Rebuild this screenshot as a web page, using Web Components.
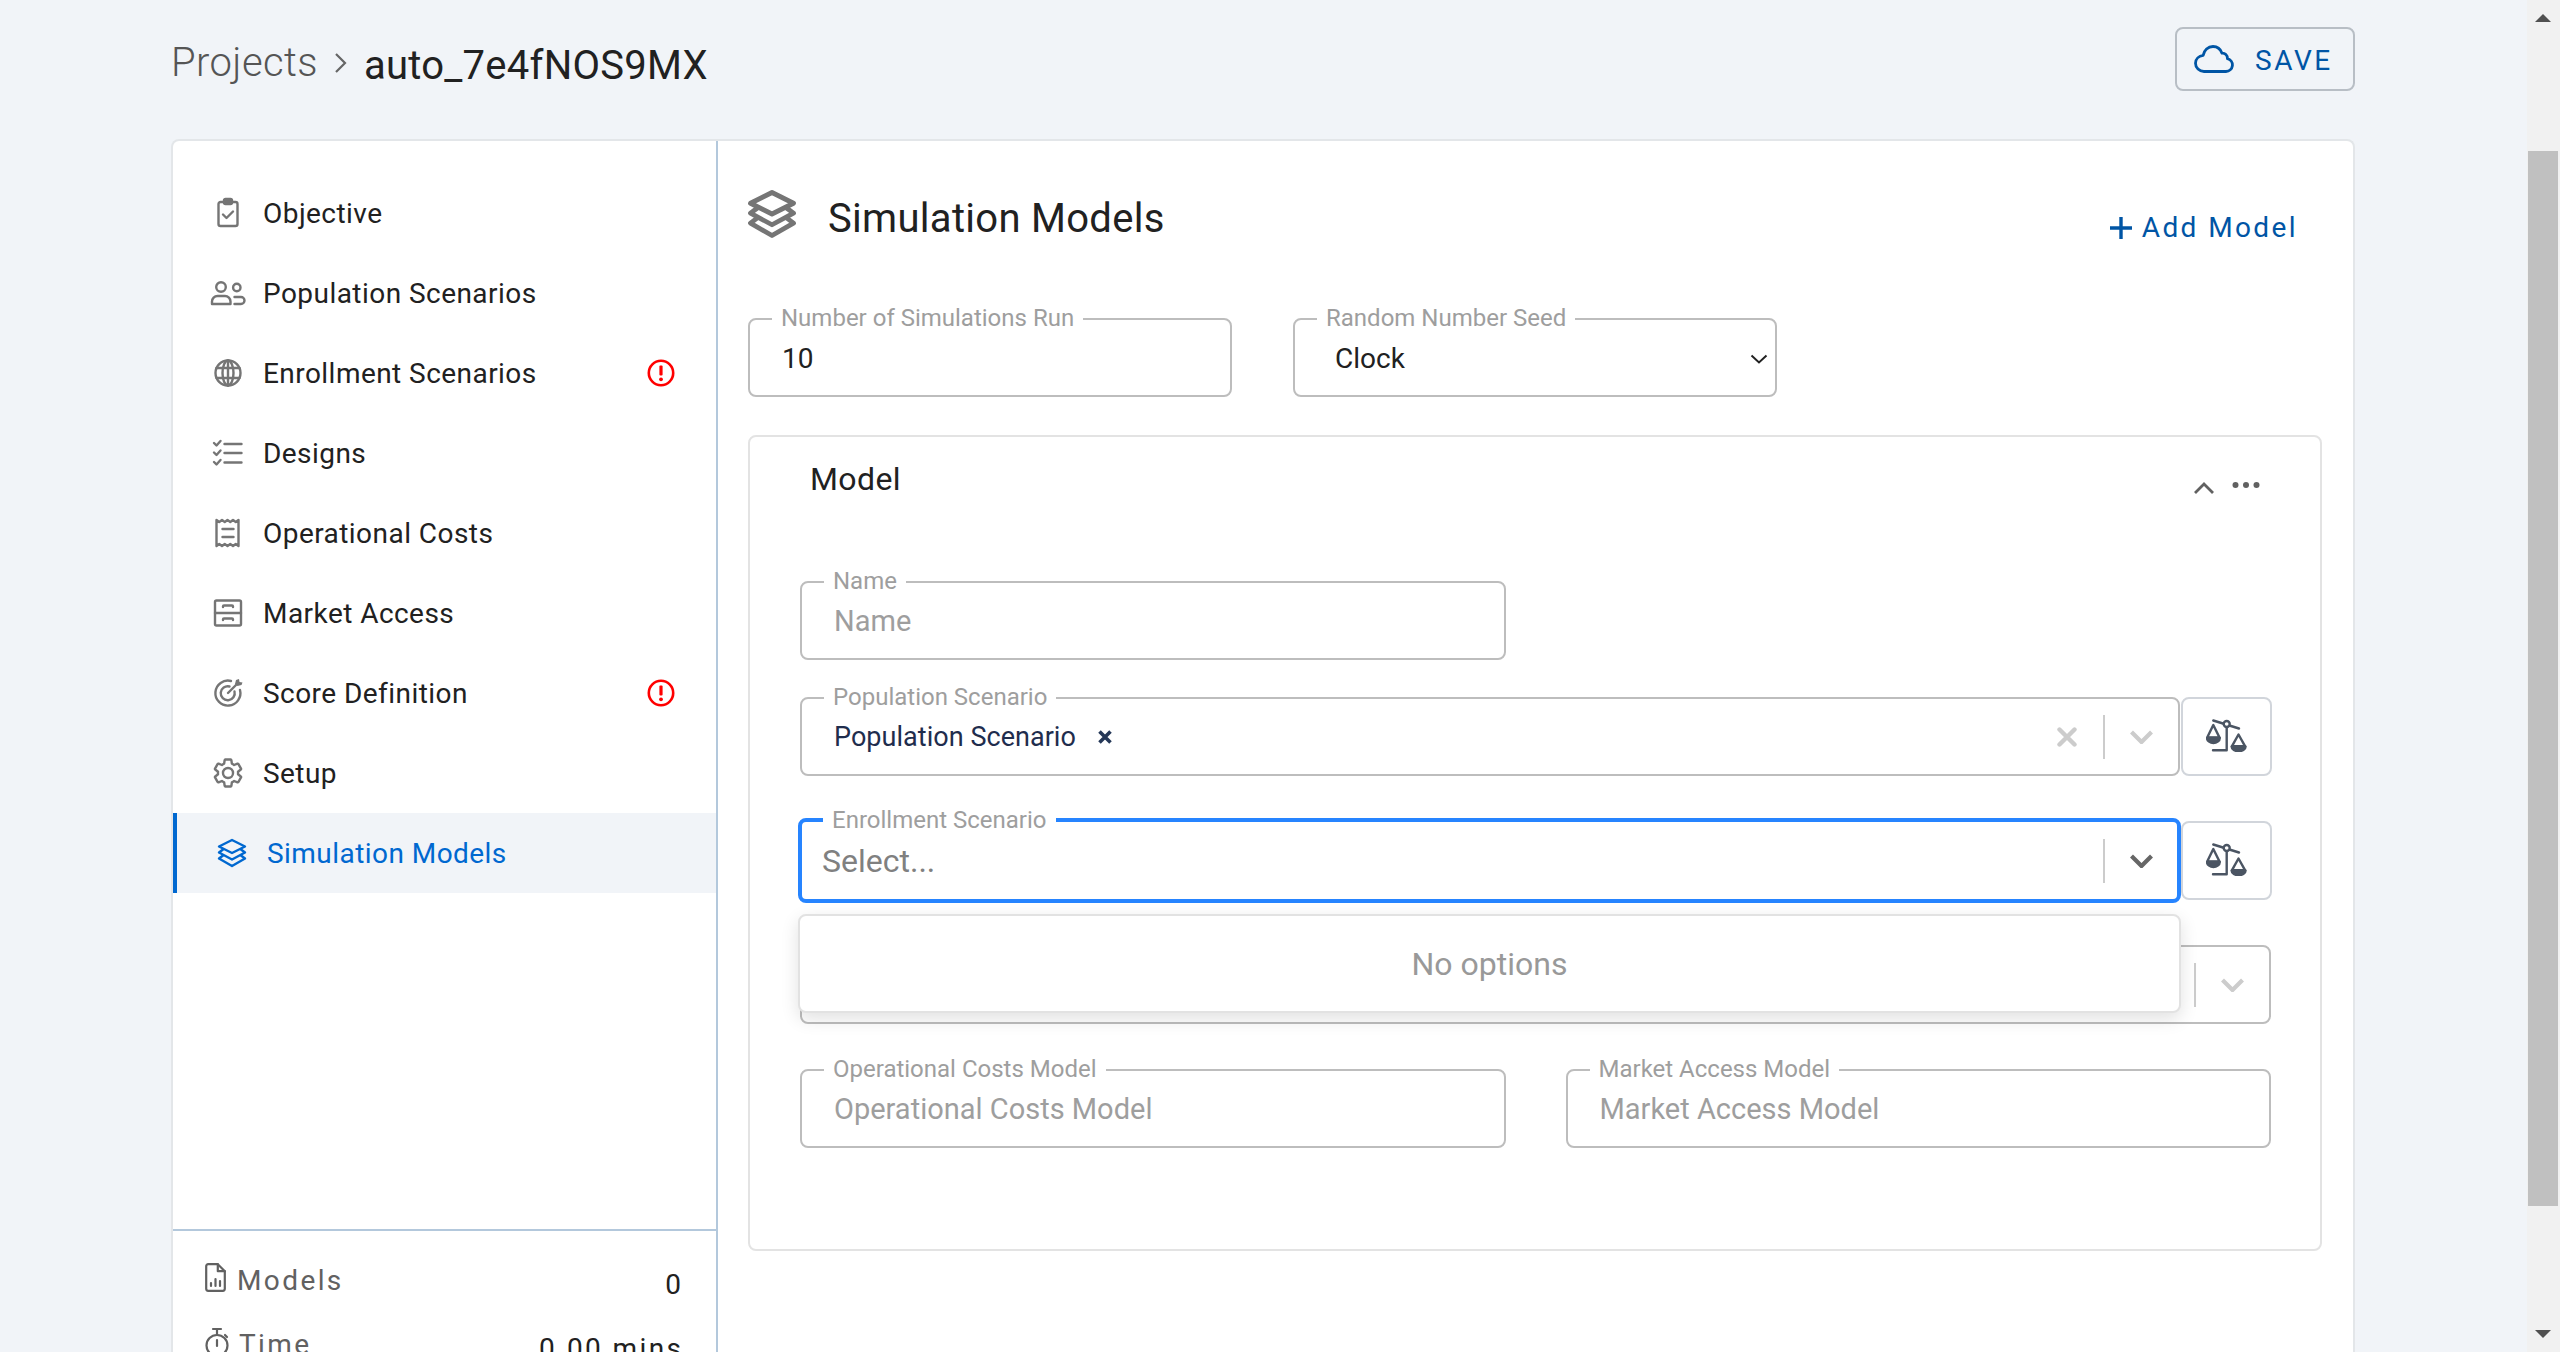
<!DOCTYPE html>
<html>
<head>
<meta charset="utf-8">
<style>
  html, body { margin: 0; height: 100%; overflow: hidden; background: #f1f4f8; }
  body { display: flex; font-family: Roboto, "Liberation Sans", sans-serif; }
</style>
</head>
<body>
<app-page>
  <page-header slot="header"></page-header>
  <side-nav slot="side">
    <nav-item icon="clipboard">Objective</nav-item>
    <nav-item icon="people">Population Scenarios</nav-item>
    <nav-item icon="globe" error>Enrollment Scenarios</nav-item>
    <nav-item icon="checklist">Designs</nav-item>
    <nav-item icon="receipt">Operational Costs</nav-item>
    <nav-item icon="archive">Market Access</nav-item>
    <nav-item icon="target" error>Score Definition</nav-item>
    <nav-item icon="gear">Setup</nav-item>
    <nav-item icon="layers" active>Simulation Models</nav-item>
    <stat-row slot="stats" icon="file" value="0">Models</stat-row>
    <stat-row slot="stats" icon="stopwatch" value="0.00 mins">Time</stat-row>
  </side-nav>
  <models-panel slot="main"></models-panel>
</app-page>
<scroll-bar></scroll-bar>

<script>
const gearPath = 'M19.14 12.94c.04-.3.06-.61.06-.94 0-.32-.02-.64-.07-.94l2.03-1.58c.18-.14.23-.41.12-.61l-1.92-3.32c-.12-.22-.37-.29-.59-.22l-2.39.96c-.5-.38-1.03-.7-1.62-.94l-.36-2.54c-.04-.24-.24-.41-.48-.41h-3.84c-.24 0-.43.17-.47.41l-.36 2.54c-.59.24-1.13.57-1.62.94l-2.39-.96c-.22-.08-.47 0-.59.22L2.74 8.87c-.12.21-.08.47.12.61l2.03 1.58c-.05.3-.07.62-.07.94s.02.64.07.94l-2.03 1.58c-.18.14-.23.41-.12.61l1.92 3.32c.12.22.37.29.59.22l2.39-.96c.5.38 1.03.7 1.62.94l.36 2.54c.05.24.24.41.48.41h3.84c.24 0 .44-.17.47-.41l.36-2.54c.59-.24 1.13-.56 1.62-.94l2.39.96c.22.08.47 0 .59-.22l1.92-3.32c.12-.22.07-.47-.12-.61l-2.01-1.58zM12 15.6c-1.98 0-3.6-1.62-3.6-3.6s1.62-3.6 3.6-3.6 3.6 1.62 3.6 3.6-1.62 3.6-3.6 3.6z';

const layers = '<path d="M18 3 31 9.5 18 16 5 9.5z"/><path d="M9 12.5 5 15.5 18 22.5 31 15.5 27 12.5"/><path d="M9 18.5 5 21.5 18 29 31 21.5 27 18.5"/>';

// all nav icons share a 36x32 box
const icons = {
  clipboard: '<rect x="8.5" y="5" width="19" height="24" rx="2"/><rect x="14" y="2" width="8" height="5" rx="1.5" fill="currentColor"/><path d="M13 17.5l3.5 3.5 6.5-6.5"/>',
  people: '<circle cx="11" cy="10" r="4.8"/><circle cx="26.8" cy="10.5" r="3.7"/><path d="M2 27v-2.5a5.5 5.5 0 0 1 5.5-5.5h7.5a5.5 5.5 0 0 1 5.5 5.5V27z"/><path d="M24.5 20h6.5a3.5 3.5 0 0 1 0 7h-6.5"/>',
  globe: '<circle cx="18" cy="16" r="12.5"/><ellipse cx="18" cy="16" rx="5.5" ry="12.5"/><path d="M18 3.5v25M6.5 11h23M6.5 21h23"/>',
  checklist: '<path d="M4 6l2.5 2.5 4-4.5M4 15.5l2.5 2.5 4-4.5M4 25l2.5 2.5 4-4.5M14.5 7H31.5M14.5 16H31.5M14.5 25.5H31.5"/>',
  receipt: '<path d="M6.5 3l2.75 2 2.75-2 2.75 2 2.75-2 2.75 2 2.75-2 2.75 2 2.75-2v26l-2.75-2-2.75 2-2.75-2-2.75 2-2.75-2-2.75 2-2.75-2-2.75 2z"/><path d="M12.5 12H23.5M12.5 20H23.5"/>',
  archive: '<rect x="5" y="3.5" width="26" height="25" rx="1.5"/><path d="M5 16H31M13 10V9.5a1 1 0 0 1 1-1h8a1 1 0 0 1 1 1V10M13 23v-.5a1 1 0 0 1 1-1h8a1 1 0 0 1 1 1v.5"/>',
  target: '<path d="M21 4A12.5 12.5 0 1 0 30 13"/><path d="M19.5 9.5A7 7 0 1 0 24.5 14.5"/><path d="M18 16 27 7"/><path d="M25 7l1-4 3-1 .5 3 3 .5-1 2.5-4 1z" fill="currentColor" stroke="none"/>',
  gear: `<g transform="translate(18 16) scale(1.4) translate(-12 -12)"><path vector-effect="non-scaling-stroke" d="${gearPath}"/></g>`,
  layers: layers
};

class UiIcon extends HTMLElement {
  connectedCallback() {
    const name = this.getAttribute('name');
    this.attachShadow({ mode: 'open' }).innerHTML = `
      <style>
        :host { display: block; width: 36px; height: 32px; flex: none; }
        svg { display: block; fill: none; stroke: currentColor; stroke-width: 2.4; stroke-linecap: round; stroke-linejoin: round; }
      </style>
      <svg width="36" height="32" viewBox="0 0 36 32">${icons[name]}</svg>
    `;
  }
}

class NavItem extends HTMLElement {
  connectedCallback() {
    this.attachShadow({ mode: 'open' }).innerHTML = `
      <style>
        :host {
          display: flex;
          align-items: center;
          gap: 17px;
          height: 80px;
          padding: 0 37px 0 37px;
          font-size: 28px;
          letter-spacing: .45px;
          color: #212121;
          box-sizing: border-box;
        }
        :host([active]) {
          background: #f1f4f8;
          border-left: 4px solid #0068d0;
          padding-left: 37px;
          color: #0068d0;
        }
        ui-icon { color: #757575; }
        :host([active]) ui-icon { color: #0068d0; }
        .error { margin-left: auto; display: block; }
      </style>
      <ui-icon name="${this.getAttribute('icon')}"></ui-icon>
      <slot></slot>
      ${this.hasAttribute('error') ? `
      <svg class="error" width="36" height="32" viewBox="0 0 36 32">
        <circle cx="18" cy="16" r="12.2" fill="none" stroke="#f00" stroke-width="2.6"/>
        <rect x="16.4" y="8.5" width="3.2" height="10" rx="1" fill="#f00"/>
        <circle cx="18" cy="22.3" r="1.9" fill="#f00"/>
      </svg>` : ''}
    `;
  }
}

class StatRow extends HTMLElement {
  connectedCallback() {
    const isFile = this.getAttribute('icon') === 'file';
    this.attachShadow({ mode: 'open' }).innerHTML = `
      <style>
        :host {
          display: flex;
          height: 64px;
          padding: 0 35px 0 32px;
          box-sizing: border-box;
          font-size: 28px;
          line-height: 36px;
          color: #616161;
          letter-spacing: 2.4px;
        }
        svg { display: block; flex: none; fill: none; stroke: #616161; stroke-width: 2.2; stroke-linecap: round; stroke-linejoin: round; margin-right: ${isFile ? 11 : 10}px; }
        .value { margin-left: auto; margin-top: 4px; margin-right: -2.4px; color: #212121; letter-spacing: 2.4px; }
        :host([icon="file"]) .value { letter-spacing: 0; margin-right: 0; }
      </style>
      ${isFile ? `
      <svg width="21" height="29" viewBox="0 0 21 29">
        <path d="M1.2 3.2a2 2 0 0 1 2-2h9.6l7 7v17.6a2 2 0 0 1-2 2H3.2a2 2 0 0 1-2-2z"/>
        <path d="M12.8 1.2v7h7M6 23v-3M10.5 23v-7M15 23v-5"/>
      </svg>` : `
      <svg width="24" height="32" viewBox="0 0 24 32">
        <circle cx="12" cy="18.5" r="10.5"/>
        <path d="M8 2h8M12 2v5M12 19v-6M20 8l2 2"/>
      </svg>`}
      <span><slot></slot></span>
      <span class="value">${this.getAttribute('value')}</span>
    `;
  }
}

class SideNav extends HTMLElement {
  connectedCallback() {
    this.attachShadow({ mode: 'open' }).innerHTML = `
      <style>
        :host {
          display: flex;
          flex-direction: column;
          width: 543px;
          flex: none;
          border-right: 2px solid #b3c8dc;
        }
        .items { height: 1056px; padding-top: 32px; flex: none; }
        .stats { border-top: 2px solid #b3c8dc; padding-top: 32px; }
      </style>
      <div class="items"><slot></slot></div>
      <div class="stats"><slot name="stats"></slot></div>
    `;
  }
}

class PageHeader extends HTMLElement {
  connectedCallback() {
    this.attachShadow({ mode: 'open' }).innerHTML = `
      <style>
        :host {
          display: flex;
          align-items: center;
          height: 64px;
          padding-top: 27px;
          margin-bottom: 48px;
          font-size: 40px;
        }
        .root { font-weight: 300; color: #555; letter-spacing: .4px; position: relative; top: 3px; }
        .sep { margin: 8px 16px 0 16px; display: block; }
        .current { color: #212121; letter-spacing: .25px; position: relative; top: 6px; }
        button {
          margin-left: auto;
          display: flex;
          align-items: center;
          gap: 21px;
          width: 180px;
          height: 64px;
          padding: 0 0 0 17px;
          box-sizing: border-box;
          background: transparent;
          border: 2px solid #b8bec5;
          border-radius: 8px;
          font: 28px Roboto, sans-serif;
          letter-spacing: 2.6px;
          color: #0055a5;
        }
        button span { position: relative; top: 1px; }
      </style>
      <span class="root">Projects</span>
      <svg class="sep" width="14" height="24" viewBox="0 0 14 24" fill="none" stroke="#666" stroke-width="2.2"><path d="M2 3l9 9-9 9"/></svg>
      <span class="current">auto_7e4fNOS9MX</span>
      <button>
        <svg width="40" height="28" viewBox="0 0 40 28" fill="none" stroke="#0055a5" stroke-width="2.8" stroke-linejoin="round">
          <path d="M10 26.5H32a6.5 6.5 0 0 0 1.5-12.8C33.5 10 31 8 28 8.2 26.5 4 23 1.5 19 1.5c-5 0-9 3.8-9.8 8.8C4.8 10.8 1.5 14 1.5 18.2c0 4.6 3.8 8.3 8.5 8.3z"/>
        </svg>
        <span>SAVE</span>
      </button>
    `;
  }
}

class OutlinedField extends HTMLElement {
  connectedCallback() {
    const label = this.getAttribute('label');
    this.attachShadow({ mode: 'open' }).innerHTML = `
      <style>
        :host {
          display: flex;
          align-items: center;
          position: relative;
          height: 79px;
          box-sizing: border-box;
          padding: 0 0 0 32px;
          border: 2px solid #bdbdbd;
          border-radius: 8px;
          background: #fff;
          font-size: 28px;
          color: #212121;
        }
        :host([focused]) {
          height: 85px;
          margin: -3px -1px -3px -2px;
          padding-left: 20px;
          border: 4px solid #2684ff;
        }
        .label {
          position: absolute;
          left: 22px;
          top: -16px;
          padding: 0 9px;
          background: #fff;
          font-size: 24px;
          line-height: 28px;
          color: #9e9e9e;
        }
        :host([focused]) .label { left: 21px; top: -16px; }
        :host([placeholder]) { color: #9e9e9e; font-size: 29px; }
      </style>
      ${label ? `<span class="label">${label}</span>` : ''}
      <slot></slot>
    `;
  }
}

class SelectControls extends HTMLElement {
  connectedCallback() {
    const live = this.hasAttribute('live');
    const color = live ? '#666' : '#ccc';
    this.attachShadow({ mode: 'open' }).innerHTML = `
      <style>
        :host { display: flex; align-items: center; margin-left: auto; height: 100%; flex: none; }
        .sep { width: 2px; height: 44px; background: #ccc; margin-right: 25px; }
        .clear { margin-right: 26px; display: block; }
        .chev { margin-right: ${live ? 24 : 25}px; display: block; }
      </style>
      ${this.hasAttribute('clear') ? `
      <svg class="clear" width="20" height="20" viewBox="0 0 20 20" stroke="#ccc" stroke-width="4.4" stroke-linecap="round"><path d="M2.5 2.5l15 15M17.5 2.5l-15 15"/></svg>` : ''}
      <div class="sep"></div>
      <svg class="chev" width="23" height="14" viewBox="0 0 23 14" fill="none" stroke="${color}" stroke-width="4.2"><path d="M1.5 2l10 10 10-10"/></svg>
    `;
  }
}

class CompareButton extends HTMLElement {
  connectedCallback() {
    this.attachShadow({ mode: 'open' }).innerHTML = `
      <style>
        :host {
          display: flex;
          align-items: center;
          justify-content: center;
          width: 91px;
          height: 79px;
          flex: none;
          box-sizing: border-box;
          border: 2px solid #d1d5db;
          border-radius: 8px;
          background: #fff;
          margin: 0 -1px 0 1px;
        }
        svg { display: block; margin-bottom: 2px; }
      </style>
      <svg width="41" height="33" viewBox="0 0 41 33" fill="none" stroke="#4b5563" stroke-width="2.4" stroke-linecap="round" stroke-linejoin="round">
        <path d="M7.3 1.5 33 9.5"/>
        <path d="M20.7 7v24.3M7 31.3H20.7"/>
        <circle cx="20.7" cy="5" r="3" fill="#fff"/>
        <path d="M7.3 6 1.2 18.5H13.5z"/>
        <path d="M1 19H13.8C13.8 22 10.5 24 7.4 24S1 22 1 19z" fill="#4b5563"/>
        <path d="M32.5 15.5 26 27.2H39z"/>
        <path d="M25.6 27.6H39.6C39.6 30.6 36 32.2 32.6 32.2S25.6 30.6 25.6 27.6z" fill="#4b5563"/>
      </svg>
    `;
  }
}

class ModelsPanel extends HTMLElement {
  connectedCallback() {
    this.attachShadow({ mode: 'open' }).innerHTML = `
      <style>
        :host { display: block; flex: 1; min-width: 0; padding: 0 31px 0 30px; }
        .title-row { display: flex; align-items: flex-start; height: 176px; }
        .title-icon { margin-top: 49px; display: block; color: #757575; }
        h1 { margin: 48px 0 0 32px; font-size: 40px; font-weight: 400; line-height: 60px; letter-spacing: .3px; color: #212121; }
        .add { margin: 69px 24px 0 auto; display: flex; align-items: center; gap: 10px; font-size: 28px; line-height: 36px; letter-spacing: 2.4px; color: #0055a5; }
        .top-fields { display: flex; gap: 61px; padding-bottom: 38px; margin-top: 1px; }
        .top-fields outlined-field { width: 484px; padding-top: 2px; }
        .seed-value { margin-left: 8px; }
        .seed-chev { margin: 0 7px 0 auto; display: block; }
        .model { border: 2px solid #e3e3e3; border-radius: 8px; height: 816px; box-sizing: border-box; }
        .model-head { display: flex; align-items: flex-start; height: 144px; padding: 0 60px 0 60px; box-sizing: border-box; }
        h2 { margin: 22px 0 0; font-size: 32px; font-weight: 400; line-height: 40px; color: #212121; letter-spacing: .4px; }
        .model-tools { margin-left: auto; display: flex; gap: 18px; margin-top: 45px; }
        .model-body { padding: 0 49px 0 50px; display: flex; flex-direction: column; gap: 45px; }
        .grid { display: grid; grid-template-columns: 1fr 1fr; gap: 60px; }
        .grid.first { margin-bottom: -8px; }
        .row { display: flex; position: relative; }
        .row outlined-field { flex: 1; min-width: 0; }
        .tag-x { margin-left: 22px; display: block; }
        .select-text { font-size: 32px; color: #808080; }
        .tag { color: #1f2d4d; font-size: 27px; letter-spacing: .04px; }
        select-dropdown { position: absolute; left: -2px; right: 90px; top: 93px; }
      </style>
      <div class="title-row">
        <svg class="title-icon" width="48" height="48" viewBox="3.5 1.5 29 29" fill="none" stroke="currentColor" stroke-width="2.9" stroke-linejoin="round" stroke-linecap="round">${layers}</svg>
        <h1>Simulation Models</h1>
        <div class="add">
          <svg width="22" height="22" viewBox="0 0 22 22" stroke="#0055a5" stroke-width="3.4"><path d="M11 0v22M0 11h22"/></svg>
          <span>Add Model</span>
        </div>
      </div>
      <div class="top-fields">
        <outlined-field label="Number of Simulations Run">10</outlined-field>
        <outlined-field label="Random Number Seed">
          <span class="seed-value">Clock</span>
          <svg class="seed-chev" width="18" height="10" viewBox="0 0 18 10" fill="none" stroke="#212121" stroke-width="2"><path d="M1.5 1.5 9 8.5 16.5 1.5"/></svg>
        </outlined-field>
      </div>
      <div class="model">
        <div class="model-head">
          <h2>Model</h2>
          <div class="model-tools">
            <svg width="20" height="12" viewBox="0 0 20 12" fill="none" stroke="#616161" stroke-width="2.8"><path d="M1 11 10 2l9 9"/></svg>
            <svg width="28" height="8" viewBox="0 0 28 8" fill="#616161"><circle cx="3.5" cy="3" r="3"/><circle cx="14" cy="3" r="3"/><circle cx="24.5" cy="3" r="3"/></svg>
          </div>
        </div>
        <div class="model-body">
          <div class="grid first">
            <outlined-field label="Name" placeholder>Name</outlined-field>
          </div>
          <div class="row">
            <outlined-field label="Population Scenario">
              <span class="tag">Population Scenario</span>
              <svg class="tag-x" width="14" height="14" viewBox="0 0 14 14" stroke="#253858" stroke-width="3.6"><path d="M1.5 1.5l11 11M12.5 1.5l-11 11"/></svg>
              <select-controls clear></select-controls>
            </outlined-field>
            <compare-button></compare-button>
          </div>
          <div class="row">
            <outlined-field label="Enrollment Scenario" focused>
              <span class="select-text">Select...</span>
              <select-controls live></select-controls>
            </outlined-field>
            <compare-button></compare-button>
            <select-dropdown>No options</select-dropdown>
          </div>
          <div class="row">
            <outlined-field>
              <select-controls></select-controls>
            </outlined-field>
          </div>
          <div class="grid">
            <outlined-field label="Operational Costs Model" placeholder>Operational Costs Model</outlined-field>
            <outlined-field label="Market Access Model" placeholder>Market Access Model</outlined-field>
          </div>
        </div>
      </div>
    `;
  }
}

class SelectDropdown extends HTMLElement {
  connectedCallback() {
    this.attachShadow({ mode: 'open' }).innerHTML = `
      <style>
        :host {
          display: flex;
          align-items: center;
          justify-content: center;
          height: 99px;
          box-sizing: border-box;
          border: 2px solid #e2e2e2;
          border-radius: 8px;
          background: #fff;
          box-shadow: 0 6px 18px rgba(0,0,0,.12);
          font-size: 32px;
          color: #999;
          z-index: 2;
        }
      </style>
      <slot></slot>
    `;
  }
}

class ScrollBar extends HTMLElement {
  connectedCallback() {
    this.attachShadow({ mode: 'open' }).innerHTML = `
      <style>
        :host {
          display: flex;
          flex-direction: column;
          width: 33px;
          height: 1352px;
          flex: none;
          background: #f1f1f1;
        }
        svg { display: block; margin: 14px 0 0 8px; }
        .thumb { width: 30px; height: 1055px; margin: 129px 0 124px 1px; background: #c0c0c0; }
        svg.down { margin-top: 0; }
      </style>
      <svg width="16" height="8" viewBox="0 0 16 8" fill="#505050"><path d="M8 0l8 8H0z"/></svg>
      <div class="thumb"></div>
      <svg class="down" width="16" height="8" viewBox="0 0 16 8" fill="#505050"><path d="M0 0h16l-8 8z"/></svg>
    `;
  }
}

class AppPage extends HTMLElement {
  connectedCallback() {
    this.attachShadow({ mode: 'open' }).innerHTML = `
      <style>
        :host { display: block; flex: 1; min-width: 0; height: 1352px; overflow: hidden; padding: 0 172px 0 171px; box-sizing: border-box; }
        .card {
          display: flex;
          background: #fff;
          border: 2px solid #e3e6e9;
          border-bottom: 0;
          border-radius: 8px 8px 0 0;
          min-height: 1400px;
        }
      </style>
      <slot name="header"></slot>
      <div class="card">
        <slot name="side"></slot>
        <slot name="main"></slot>
      </div>
    `;
  }
}

customElements.define('ui-icon', UiIcon);
customElements.define('nav-item', NavItem);
customElements.define('stat-row', StatRow);
customElements.define('side-nav', SideNav);
customElements.define('page-header', PageHeader);
customElements.define('outlined-field', OutlinedField);
customElements.define('select-controls', SelectControls);
customElements.define('compare-button', CompareButton);
customElements.define('select-dropdown', SelectDropdown);
customElements.define('models-panel', ModelsPanel);
customElements.define('scroll-bar', ScrollBar);
customElements.define('app-page', AppPage);
</script>
</body>
</html>
